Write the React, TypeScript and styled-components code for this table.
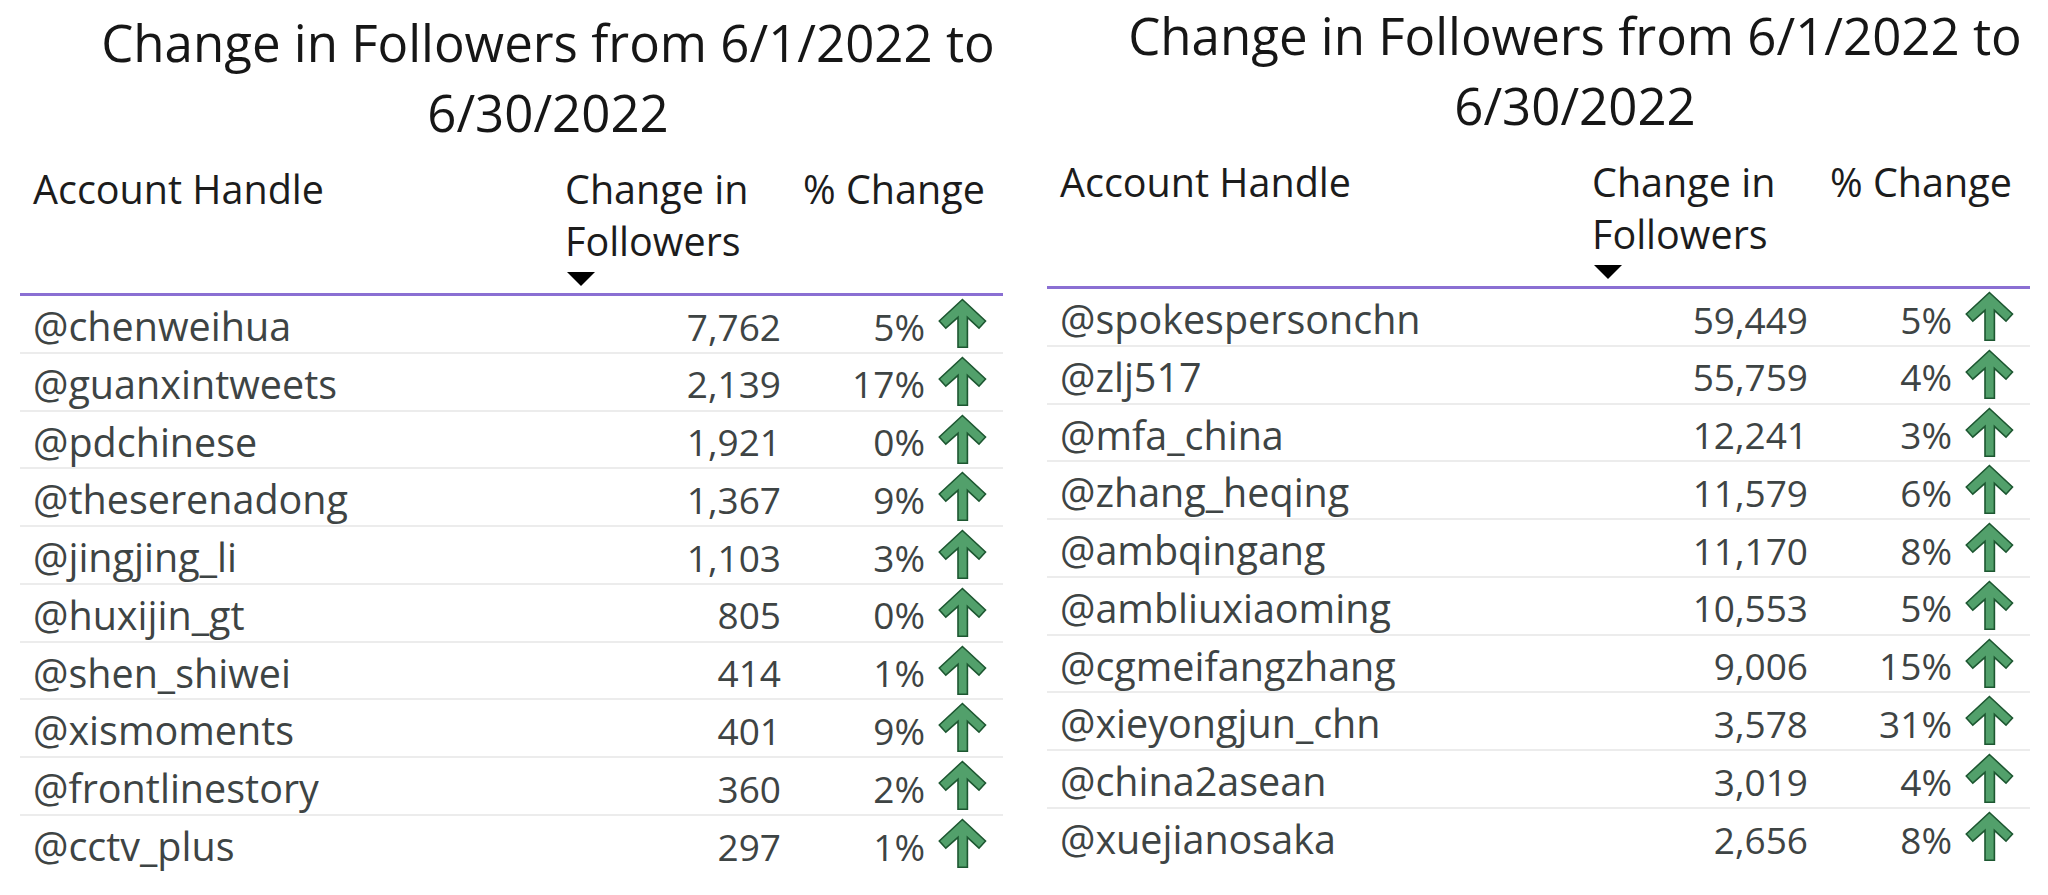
import React from 'react'
import styled, { createGlobalStyle } from 'styled-components'

const GlobalStyle = createGlobalStyle`
  html, body {
    margin: 0;
    padding: 0;
    background: #ffffff;
  }
  body {
    font-family: 'Open Sans', 'Noto Sans', sans-serif;
  }
`

interface Account {
  handle: string
  change: string
  percent: string
}

const leftAccounts: Account[] = [
  { handle: '@chenweihua', change: '7,762', percent: '5%' },
  { handle: '@guanxintweets', change: '2,139', percent: '17%' },
  { handle: '@pdchinese', change: '1,921', percent: '0%' },
  { handle: '@theserenadong', change: '1,367', percent: '9%' },
  { handle: '@jingjing_li', change: '1,103', percent: '3%' },
  { handle: '@huxijin_gt', change: '805', percent: '0%' },
  { handle: '@shen_shiwei', change: '414', percent: '1%' },
  { handle: '@xismoments', change: '401', percent: '9%' },
  { handle: '@frontlinestory', change: '360', percent: '2%' },
  { handle: '@cctv_plus', change: '297', percent: '1%' },
]

const rightAccounts: Account[] = [
  { handle: '@spokespersonchn', change: '59,449', percent: '5%' },
  { handle: '@zlj517', change: '55,759', percent: '4%' },
  { handle: '@mfa_china', change: '12,241', percent: '3%' },
  { handle: '@zhang_heqing', change: '11,579', percent: '6%' },
  { handle: '@ambqingang', change: '11,170', percent: '8%' },
  { handle: '@ambliuxiaoming', change: '10,553', percent: '5%' },
  { handle: '@cgmeifangzhang', change: '9,006', percent: '15%' },
  { handle: '@xieyongjun_chn', change: '3,578', percent: '31%' },
  { handle: '@china2asean', change: '3,019', percent: '4%' },
  { handle: '@xuejianosaka', change: '2,656', percent: '8%' },
]

const Page = styled.div`
  display: flex;
  align-items: flex-start;
  gap: 44px;
  padding-left: 20px;
`

interface PanelProps {
  $offset?: number
}

const Panel = styled.section<PanelProps>`
  width: 983px;
  padding-top: ${props => props.$offset || 0}px;
`

const Title = styled.h1`
  margin: 0;
  padding-left: 73px;
  font-size: 51px;
  font-weight: 400;
  line-height: 70px;
  text-align: center;
  color: #161616;
  white-space: nowrap;
`

const COLUMNS = '545px 216px 144px 78px'

const HeaderRow = styled.div`
  display: grid;
  grid-template-columns: ${COLUMNS};
  align-items: start;
  margin-top: 16px;
  font-size: 39.5px;
  line-height: 52px;
  color: #1c1c1c;
`

interface HeaderCellProps {
  $span?: number
  $indent?: number
}

const HeaderCell = styled.div<HeaderCellProps>`
  grid-column: span ${props => props.$span || 1};
  padding-left: ${props => props.$indent || 0}px;
  white-space: ${props => (props.$span ? 'nowrap' : 'normal')};
`

const SortDown = styled.div`
  width: 0;
  height: 0;
  margin: 5px 0 0 2px;
  border-left: 14px solid transparent;
  border-right: 14px solid transparent;
  border-top: 14px solid #000000;
`

const Rule = styled.div`
  height: 3px;
  margin-top: 7px;
  background: #8a6fd3;
`

const Row = styled.div`
  display: grid;
  grid-template-columns: ${COLUMNS};
  align-items: center;
  box-sizing: border-box;
  height: 57.75px;
  padding-top: 3px;
  border-bottom: 2px solid #ececec;
  font-size: 39.5px;
  color: #3e4444;

  &:last-child {
    border-bottom: none;
  }
`

const HandleCell = styled.div`
  padding-left: 13px;
  white-space: nowrap;
`

const ValueCell = styled.div`
  font-size: 37px;
  text-align: right;
  white-space: nowrap;
`

const ArrowCell = styled.div`
  align-self: start;
  margin-top: -1px;
  padding-left: 13px;
  height: 49px;
`

const UpArrow = (): React.ReactElement => (
  <svg width="49" height="51" viewBox="-1 -1 49 51" style={{ display: 'block' }}>
    <polygon
      points="23.4,0.5 46.5,22 40,29.2 28.4,18.4 28.4,48.2 19,48.2 19,18.4 6.8,29.2 0.3,22"
      fill="#52a06b"
      stroke="#1d5731"
      strokeWidth="1.6"
      strokeLinejoin="miter"
    />
  </svg>
)

interface FollowerTableProps {
  accounts: Account[]
  offset?: number
}

const FollowerTable = ({ accounts, offset }: FollowerTableProps): React.ReactElement => {
  return (
    <Panel $offset={offset}>
      <Title>
        Change in Followers from 6/1/2022 to
        <br />
        6/30/2022
      </Title>
      <HeaderRow>
        <HeaderCell $indent={13}>Account Handle</HeaderCell>
        <div>
          <HeaderCell>Change in Followers</HeaderCell>
          <SortDown />
        </div>
        <HeaderCell $span={2} $indent={22}>% Change</HeaderCell>
      </HeaderRow>
      <Rule />
      <div>
        {accounts.map(account => (
          <Row key={account.handle}>
            <HandleCell>{account.handle}</HandleCell>
            <ValueCell>{account.change}</ValueCell>
            <ValueCell>{account.percent}</ValueCell>
            <ArrowCell>
              <UpArrow />
            </ArrowCell>
          </Row>
        ))}
      </div>
    </Panel>
  )
}

const App = (): React.ReactElement => {
  return (
    <>
      <GlobalStyle />
      <Page>
        <FollowerTable accounts={leftAccounts} offset={7} />
        <FollowerTable accounts={rightAccounts} />
      </Page>
    </>
  )
}

export default App
